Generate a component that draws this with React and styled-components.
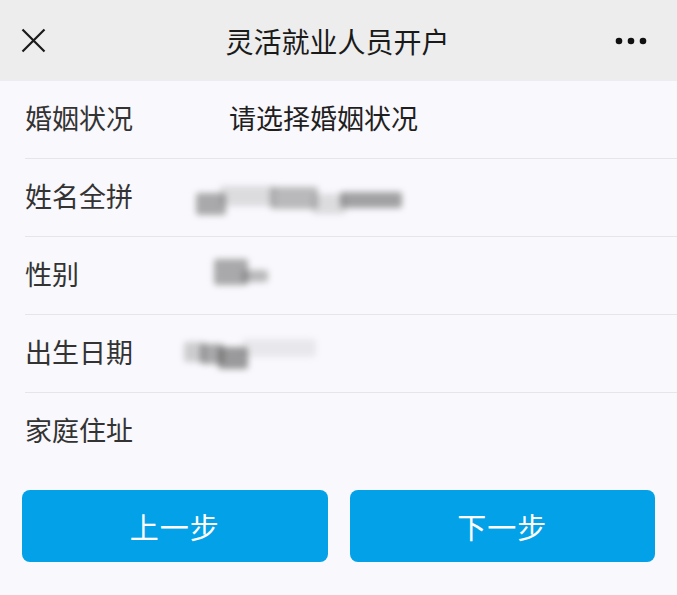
import React from "react";
import styled, { createGlobalStyle } from "styled-components";

const GlobalStyle = createGlobalStyle`
  html, body {
    margin: 0;
    padding: 0;
    background: #f9f8fc;
    font-family: "Noto Sans CJK SC", "Noto Sans", sans-serif;
  }
`;

// data
const rows = [
  { label: "婚姻状况", value: "请选择婚姻状况" },
  {
    label: "姓名全拼",
    smudge: [
      { w: 30, h: 22, o: 0.5, dy: 6 },
      { w: 56, h: 20, o: 0.18, dy: -2 },
      { w: 48, h: 22, o: 0.4, dy: 0 },
      { w: 34, h: 20, o: 0.18, dy: 6 },
      { w: 62, h: 16, o: 0.55, dy: 2 },
    ],
    offset: 196,
  },
  {
    label: "性别",
    smudge: [
      { w: 34, h: 26, o: 0.5, dy: -4 },
      { w: 26, h: 12, o: 0.4, dy: 0 },
    ],
    offset: 214,
  },
  {
    label: "出生日期",
    smudge: [
      { w: 22, h: 20, o: 0.28, dy: -2 },
      { w: 24, h: 20, o: 0.5, dy: 0 },
      { w: 30, h: 22, o: 0.6, dy: 4 },
      { w: 74, h: 18, o: 0.1, dy: -6 },
    ],
    offset: 184,
  },
  { label: "家庭住址" },
];

const App = () => {
  return (
    <Page>
      <GlobalStyle />
      <Header>
        <IconBtn>
          <svg width="25" height="25" viewBox="0 0 25 25">
            <path
              d="M1.5 1.5 L23.5 23.5 M23.5 1.5 L1.5 23.5"
              stroke="#1a1a1a"
              strokeWidth="2.2"
              fill="none"
            />
          </svg>
        </IconBtn>
        <Title>灵活就业人员开户</Title>
        <IconBtn>
          <svg width="32" height="8" viewBox="0 0 32 8">
            <circle cx="4" cy="4" r="3.3" fill="#111" />
            <circle cx="16" cy="4" r="3.3" fill="#111" />
            <circle cx="28" cy="4" r="3.3" fill="#111" />
          </svg>
        </IconBtn>
      </Header>

      <Form>
        {rows.map((row, i) => (
          <Row key={row.label} $last={i === rows.length - 1}>
            <Label>{row.label}</Label>
            {row.value ? <Value>{row.value}</Value> : null}
            {row.smudge ? (
              <Smudge style={{ marginLeft: row.offset - 25 - 108 }}>
                {row.smudge.map((s, j) => (
                  <Blot
                    key={j}
                    style={{
                      width: s.w,
                      height: s.h,
                      opacity: s.o,
                      transform: `translateY(${s.dy}px)`,
                    }}
                  />
                ))}
              </Smudge>
            ) : null}
          </Row>
        ))}
      </Form>

      <Actions>
        <StepBtn>上一步</StepBtn>
        <StepBtn>下一步</StepBtn>
      </Actions>
    </Page>
  );
};

export default App;

const Page = styled.div`
  width: 677px;
  min-height: 595px;
  background: #f9f8fc;
  overflow: hidden;
`;

const Header = styled.div`
  height: 81px;
  background: #ededed;
  display: flex;
  align-items: center;
  justify-content: space-between;
  padding: 0 30px 0 21px;
  box-sizing: border-box;
`;

const IconBtn = styled.div`
  display: flex;
  align-items: center;
  justify-content: center;
  line-height: 0;
`;

const Title = styled.div`
  font-size: 28px;
  color: #1a1a1a;
  margin-left: 14px;
`;

const Form = styled.div`
  display: flex;
  flex-direction: column;
  padding-left: 25px;
`;

const Row = styled.div`
  height: 77px;
  display: flex;
  align-items: center;
  border-bottom: ${(p) => (p.$last ? "none" : "1px solid #e6e5ea")};
`;

const Label = styled.div`
  width: 108px;
  font-size: 27px;
  line-height: 1;
  color: #333;
  margin-top: -4px;
`;

const Value = styled.div`
  margin-left: 96px;
  font-size: 27px;
  line-height: 1;
  color: #1f1f1f;
  margin-top: -4px;
`;

const Smudge = styled.div`
  display: flex;
  align-items: center;
  filter: blur(3px);
`;

const Blot = styled.div`
  background: #5a5a5a;
  border-radius: 3px;
  margin-right: -6px;
`;

const Actions = styled.div`
  display: grid;
  grid-template-columns: 1fr 1fr;
  gap: 22px;
  padding: 20px 22px 0 22px;
`;

const StepBtn = styled.button`
  height: 72px;
  border: none;
  border-radius: 8px;
  background: #02a1e8;
  color: #fff;
  font-family: "Noto Sans CJK SC", "Noto Sans", sans-serif;
  font-size: 29px;
  letter-spacing: 1px;
  padding: 0;
`;
